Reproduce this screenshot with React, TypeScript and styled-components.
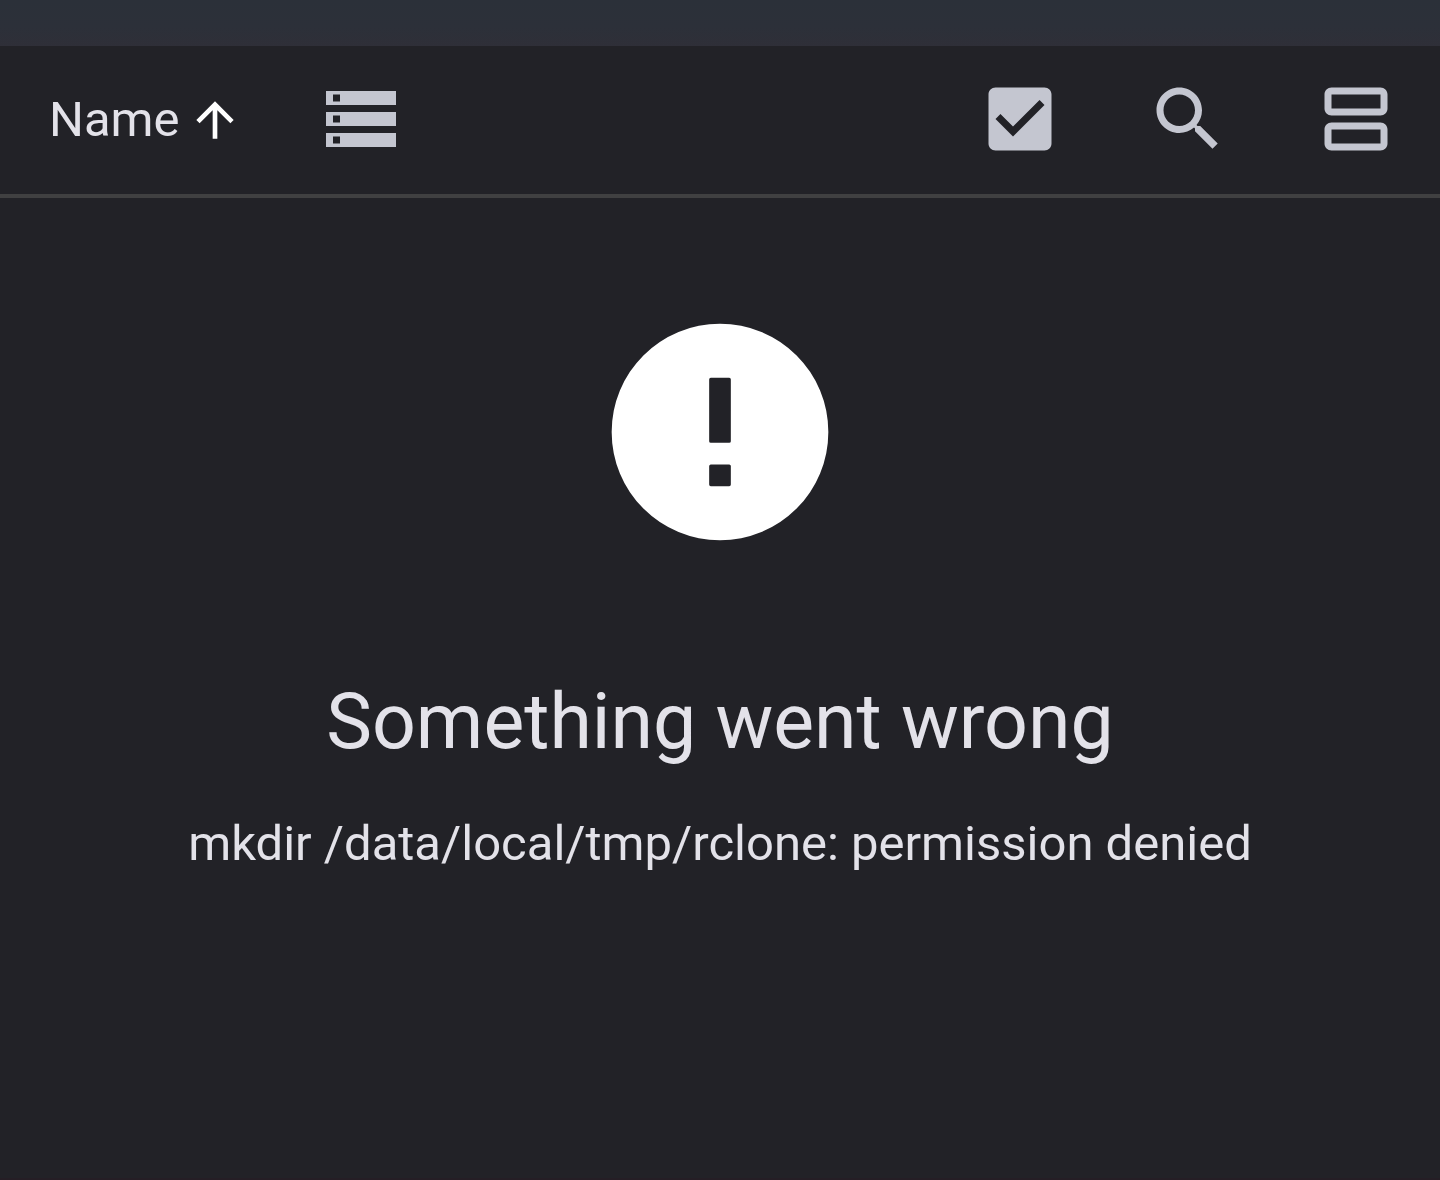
import React from "react";
import styled, { createGlobalStyle } from "styled-components";

const GlobalStyle = createGlobalStyle`
  * {
    box-sizing: border-box;
  }
  body {
    margin: 0;
    background: #222227;
    color: #e3e2e9;
    font-family: Roboto, "Noto Sans", sans-serif;
  }
`;

const Screen = styled.div`
  display: flex;
  flex-direction: column;
  min-height: 100vh;
`;

const StatusStrip = styled.div`
  height: 46px;
  background: linear-gradient(#2b3039, #2c3039 60%, #2f2f38);
`;

const Toolbar = styled.header`
  display: flex;
  align-items: center;
  justify-content: space-between;
  height: 152px;
  border-bottom: 4px solid #404041;
`;

const Group = styled.div`
  display: flex;
  align-items: center;
`;

const ToolButton = styled.button`
  display: flex;
  align-items: center;
  justify-content: center;
  padding: 0 42px 2px;
  border: 0;
  background: none;
  color: #c4c6d0;
  cursor: pointer;
`;

const SortButton = styled(ToolButton)`
  gap: 7px;
  padding: 0 34px 0 49px;
  color: #e3e2e9;
  font-family: inherit;
  font-size: 49px;
  line-height: 70px;
`;

const Glyph = styled.svg<{ $size: number; $color?: string }>`
  display: block;
  flex: none;
  width: ${({ $size }) => $size}px;
  height: ${({ $size }) => $size}px;
  fill: ${({ $color }) => $color ?? "currentColor"};
`;

const Message = styled.main`
  display: flex;
  flex: 1;
  flex-direction: column;
  align-items: center;
  padding: 104px 42px 0;
  border-bottom: 2px solid #251e25;
  text-align: center;
`;

const Title = styled.h1`
  margin: 111px 0 0;
  font-size: 77px;
  font-weight: 400;
  line-height: 98px;
`;

const Detail = styled.p`
  margin: 38px 0 0;
  font-size: 49px;
  line-height: 70px;
`;

type IconProps = { path: string; size?: number; color?: string };

const Icon = ({ path, size = 84, color }: IconProps) => (
  <Glyph viewBox="0 0 24 24" $size={size} $color={color} aria-hidden="true">
    <path fillRule="evenodd" d={path} />
  </Glyph>
);

const icons = {
  arrowUp: "M4 12l1.41 1.41L11 7.83V20h2V7.83l5.58 5.59L20 12l-8-8-8 8z",
  storage:
    "M2 20h20v-4H2v4zm2-3h2v2H4v-2zM2 4v4h20V4H2zm4 3H4V5h2v2zm-4 7h20v-4H2v4zm2-3h2v2H4v-2z",
  checkBox:
    "M19 3H5c-1.11 0-2 .9-2 2v14c0 1.1.89 2 2 2h14c1.11 0 2-.9 2-2V5c0-1.1-.89-2-2-2zm-9 14l-5-5 1.41-1.41L10 14.17l7.59-7.59L19 8l-9 9z",
  search:
    "M15.5 14h-.79l-.28-.27C15.41 12.59 16 11.11 16 9.5 16 5.91 13.09 3 9.5 3S3 5.91 3 9.5 5.91 16 9.5 16c1.61 0 3.09-.59 4.23-1.57l.27.28v.79l5 4.99L20.49 19l-4.99-5zm-6 0C7.01 14 5 11.99 5 9.5S7.01 5 9.5 5 14 7.01 14 9.5 11.99 14 9.5 14z",
  agenda:
    "M19 13H5c-1.1 0-2 .9-2 2v4c0 1.1.9 2 2 2h14c1.1 0 2-.9 2-2v-4c0-1.1-.9-2-2-2zm0 6H5v-4h14v4zm0-16H5c-1.1 0-2 .9-2 2v4c0 1.1.9 2 2 2h14c1.1 0 2-.9 2-2V5c0-1.1-.9-2-2-2zm0 6H5V5h14v4z",
  error:
    "M12 2a10 10 0 1 0 0 20a10 10 0 1 0 0-20zM11.15 7h1.7q.15 0 .15.15v5.7q0 .15-.15.15h-1.7q-.15 0-.15-.15v-5.7q0-.15.15-.15zM11.15 15h1.7q.15 0 .15.15v1.7q0 .15-.15.15h-1.7q-.15 0-.15-.15v-1.7q0-.15.15-.15z",
};

export default function App() {
  return (
    <Screen>
      <GlobalStyle />
      <StatusStrip />
      <Toolbar>
        <Group>
          <SortButton type="button">
            Name
            <Icon path={icons.arrowUp} size={56} color="#ffffff" />
          </SortButton>
          <ToolButton type="button" aria-label="Storage">
            <Icon path={icons.storage} />
          </ToolButton>
        </Group>
        <Group>
          <ToolButton type="button" aria-label="Select all">
            <Icon path={icons.checkBox} />
          </ToolButton>
          <ToolButton type="button" aria-label="Search">
            <Icon path={icons.search} />
          </ToolButton>
          <ToolButton type="button" aria-label="Change layout">
            <Icon path={icons.agenda} />
          </ToolButton>
        </Group>
      </Toolbar>
      <Message>
        <Icon path={icons.error} size={260} color="#ffffff" />
        <Title>Something went wrong</Title>
        <Detail>mkdir /data/local/tmp/rclone: permission denied</Detail>
      </Message>
    </Screen>
  );
}
